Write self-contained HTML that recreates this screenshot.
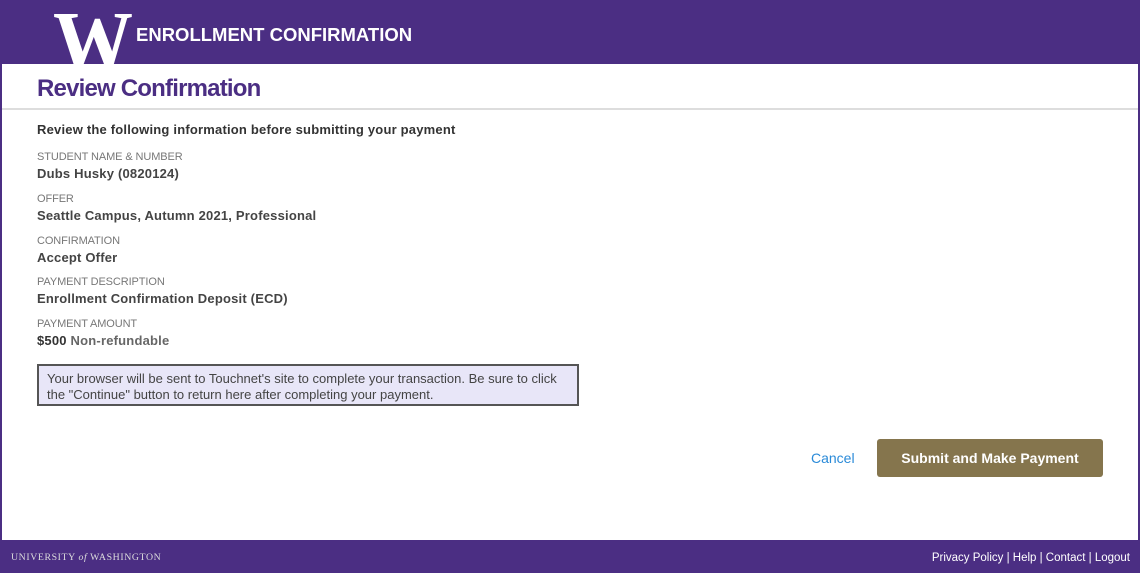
<!DOCTYPE html>
<html><head><style>
*{margin:0;padding:0;box-sizing:border-box}
body{width:1140px;height:573px;background:#4b2e83;position:relative;overflow:hidden;font-family:"Liberation Sans",sans-serif;color:#333}
.abs{position:absolute;white-space:nowrap}
.main{position:absolute;left:2px;top:64px;width:1136px;height:476px;background:#fff}
.band{position:absolute;left:2px;top:64px;width:1136px;height:46px;border-bottom:2px solid #ddd;background:#fff}
.lbl{font-size:11px;color:#777;letter-spacing:-0.1px}
.val{font-size:13px;font-weight:bold;color:#444;letter-spacing:0.2px}
</style></head><body>
<div class="main"></div>
<div class="band"></div>
<div style="position:absolute;left:0;top:0;width:200px;height:64px;overflow:hidden">
<div class="abs" style="left:53px;top:-2px;font-family:'Liberation Serif',serif;font-weight:bold;font-size:86px;color:#fff;line-height:86px;transform:scaleX(0.93);transform-origin:left">W</div>
</div>
<div class="abs" style="left:136px;top:24px;font-size:18.5px;font-weight:bold;color:#fff">ENROLLMENT CONFIRMATION</div>
<div class="abs" style="left:37px;top:75px;font-size:24px;font-weight:bold;color:#4b2e83;letter-spacing:-0.8px">Review Confirmation</div>
<div class="abs val" style="left:37px;top:122px;color:#333">Review the following information before submitting your payment</div>
<div class="abs lbl" style="left:37px;top:151px">STUDENT NAME &amp; NUMBER</div>
<div class="abs val" style="left:37px;top:166px">Dubs Husky (0820124)</div>
<div class="abs lbl" style="left:37px;top:193px">OFFER</div>
<div class="abs val" style="left:37px;top:208px">Seattle Campus, Autumn 2021, Professional</div>
<div class="abs lbl" style="left:37px;top:235px">CONFIRMATION</div>
<div class="abs val" style="left:37px;top:250px">Accept Offer</div>
<div class="abs lbl" style="left:37px;top:276px">PAYMENT DESCRIPTION</div>
<div class="abs val" style="left:37px;top:291px">Enrollment Confirmation Deposit (ECD)</div>
<div class="abs lbl" style="left:37px;top:318px">PAYMENT AMOUNT</div>
<div class="abs val" style="left:37px;top:333px"><span style="color:#333">$500</span> <span style="color:#666">Non-refundable</span></div>
<div class="abs" style="left:37px;top:364px;width:542px;height:42px;border:2px solid #555;background:#e8e6f8;font-size:13px;color:#444;padding:5px 8px;line-height:16px;white-space:normal">Your browser will be sent to Touchnet's site to complete your transaction. Be sure to click the "Continue" button to return here after completing your payment.</div>
<div class="abs" style="left:811px;top:450px;font-size:14px;color:#2a8ad8">Cancel</div>
<div class="abs" style="left:877px;top:439px;width:226px;height:38px;background:#85754d;border-radius:3px;color:#fff;font-size:14px;font-weight:bold;text-align:center;line-height:38px">Submit and Make Payment</div>
<div class="abs" style="left:11px;top:552px;font-family:'Liberation Serif',serif;font-size:9.8px;color:#ddd;letter-spacing:0.6px">UNIVERSITY <i>of</i> WASHINGTON</div>
<div class="abs" style="right:10px;top:552px;font-size:11.5px;color:#fff">Privacy Policy | Help | Contact | Logout</div>
</body></html>
